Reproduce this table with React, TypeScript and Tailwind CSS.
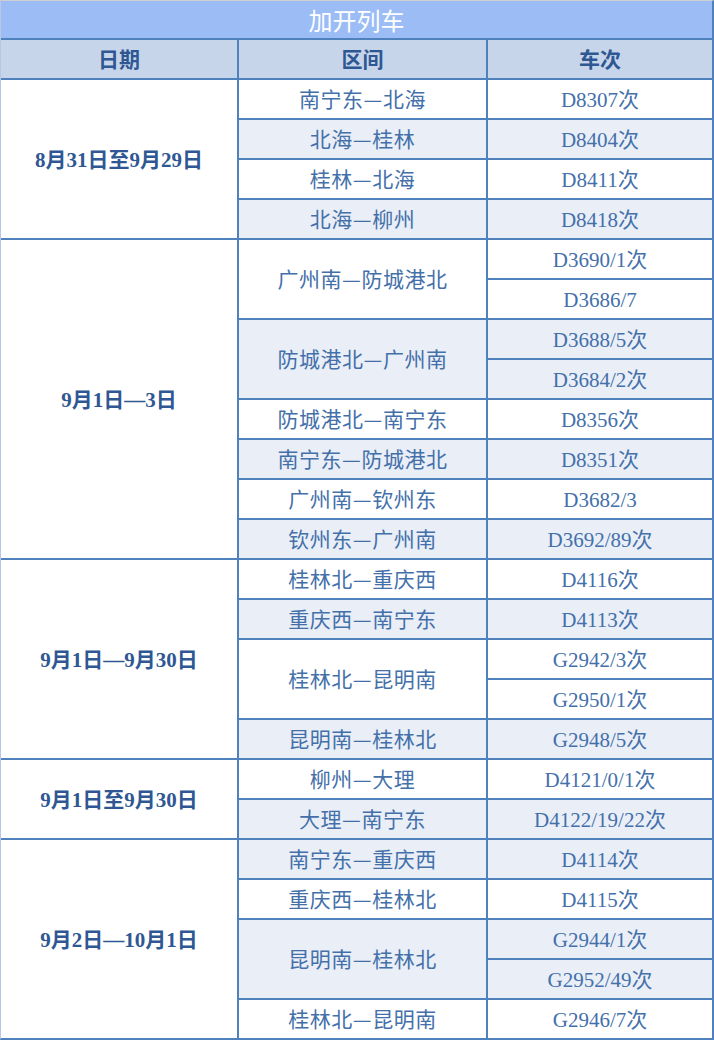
import React from "react";

type Route = {
  name: string;
  trains: string[];
  striped: boolean;
};

type Group = {
  date: string;
  routes: Route[];
};

const groups: Group[] = [
  {
    date: "8月31日至9月29日",
    routes: [
      { name: "南宁东—北海", trains: ["D8307次"], striped: false },
      { name: "北海—桂林", trains: ["D8404次"], striped: true },
      { name: "桂林—北海", trains: ["D8411次"], striped: false },
      { name: "北海—柳州", trains: ["D8418次"], striped: true },
    ],
  },
  {
    date: "9月1日—3日",
    routes: [
      { name: "广州南—防城港北", trains: ["D3690/1次", "D3686/7"], striped: false },
      { name: "防城港北—广州南", trains: ["D3688/5次", "D3684/2次"], striped: true },
      { name: "防城港北—南宁东", trains: ["D8356次"], striped: false },
      { name: "南宁东—防城港北", trains: ["D8351次"], striped: true },
      { name: "广州南—钦州东", trains: ["D3682/3"], striped: false },
      { name: "钦州东—广州南", trains: ["D3692/89次"], striped: true },
    ],
  },
  {
    date: "9月1日—9月30日",
    routes: [
      { name: "桂林北—重庆西", trains: ["D4116次"], striped: false },
      { name: "重庆西—南宁东", trains: ["D4113次"], striped: true },
      { name: "桂林北—昆明南", trains: ["G2942/3次", "G2950/1次"], striped: false },
      { name: "昆明南—桂林北", trains: ["G2948/5次"], striped: true },
    ],
  },
  {
    date: "9月1日至9月30日",
    routes: [
      { name: "柳州—大理", trains: ["D4121/0/1次"], striped: false },
      { name: "大理—南宁东", trains: ["D4122/19/22次"], striped: true },
    ],
  },
  {
    date: "9月2日—10月1日",
    routes: [
      { name: "南宁东—重庆西", trains: ["D4114次"], striped: true },
      { name: "重庆西—桂林北", trains: ["D4115次"], striped: false },
      { name: "昆明南—桂林北", trains: ["G2944/1次", "G2952/49次"], striped: true },
      { name: "桂林北—昆明南", trains: ["G2946/7次"], striped: false },
    ],
  },
];

const spanClass: Record<number, string> = {
  1: "row-span-1",
  2: "row-span-2",
  4: "row-span-4",
  5: "row-span-5",
  8: "row-span-8",
};

const cjk = "font-['Noto_Sans_CJK_SC',sans-serif]";
const serifCjk = "font-['Liberation_Serif','Noto_Sans_CJK_SC',serif]";

export default function App() {
  return (
    <div className="w-[714px] bg-white border-t border-l border-r-2 border-b-2 border-t-[#cfcfcf] border-l-[#b6c8e6] border-r-[#4f81bd] border-b-[#4f81bd]">
      <div
        className={`h-[37px] bg-[#9bbcf5] flex items-center justify-center text-white text-[24px] ${cjk}`}
      >
        加开列车
      </div>
      <div className="grid grid-cols-[236px_247px_224px] auto-rows-[38px] gap-[2px] bg-[#4f81bd] border-t-2 border-[#4f81bd]">
        <div
          className={`col-start-1 bg-[#c6d5e9] flex items-center justify-center text-[21px] font-bold text-[#2f5793] ${cjk}`}
        >
          日期
        </div>
        <div
          className={`col-start-2 bg-[#c6d5e9] flex items-center justify-center text-[21px] font-bold text-[#2f5793] ${cjk}`}
        >
          区间
        </div>
        <div
          className={`col-start-3 bg-[#c6d5e9] flex items-center justify-center text-[21px] font-bold text-[#2f5793] ${cjk}`}
        >
          车次
        </div>

        {groups.map((group) => {
          const total = group.routes.reduce((n, r) => n + r.trains.length, 0);
          return (
            <React.Fragment key={group.date}>
              <div
                className={`col-start-1 ${spanClass[total]} bg-white flex items-center justify-center pt-[3px] text-[21px] font-bold text-[#2f5793] ${serifCjk}`}
              >
                {group.date}
              </div>
              {group.routes.map((route) =>
                route.trains.map((train, i) => (
                  <React.Fragment key={route.name + train}>
                    {i === 0 && (
                      <div
                        className={`col-start-2 ${spanClass[route.trains.length]} ${
                          route.striped ? "bg-[#e9eef7]" : "bg-white"
                        } flex items-center justify-center text-[21px] tracking-[0.5px] text-[#4470aa] ${cjk}`}
                      >
                        {route.name}
                      </div>
                    )}
                    <div
                      className={`col-start-3 ${
                        route.striped ? "bg-[#e9eef7]" : "bg-white"
                      } flex items-center justify-center pt-[4px] text-[21px] text-[#4470aa] ${serifCjk}`}
                    >
                      {train}
                    </div>
                  </React.Fragment>
                ))
              )}
            </React.Fragment>
          );
        })}
      </div>
    </div>
  );
}
